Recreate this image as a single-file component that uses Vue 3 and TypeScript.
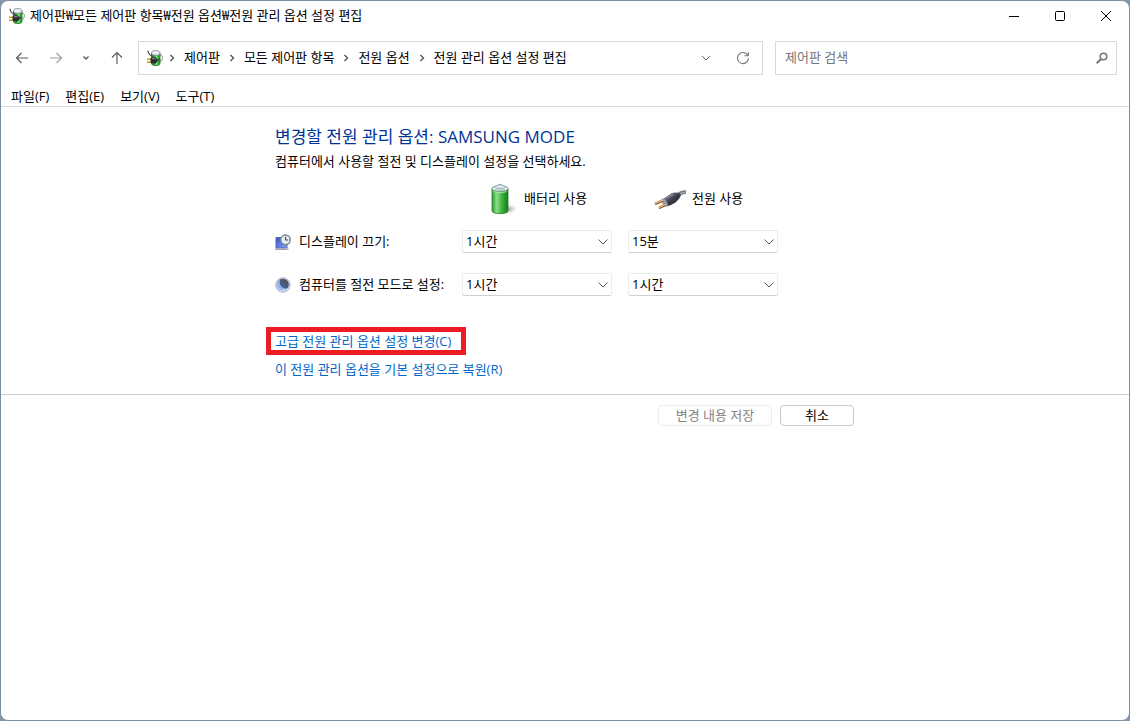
<script setup lang="ts">
import { ref } from 'vue'

interface SettingRow {
  id: string
  icon: 'display' | 'sleep'
  label: string
  battery: string
  plugged: string
}

const title = '제어판₩모든 제어판 항목₩전원 옵션₩전원 관리 옵션 설정 편집'
const crumbs = ['제어판', '모든 제어판 항목', '전원 옵션', '전원 관리 옵션 설정 편집']
const menus = ['파일(F)', '편집(E)', '보기(V)', '도구(T)']
const durations = ['1분', '5분', '15분', '30분', '1시간', '2시간', '안 함']
const query = ref('')
const rows = ref<SettingRow[]>([
  { id: 'display', icon: 'display', label: '디스플레이 끄기:', battery: '1시간', plugged: '15분' },
  { id: 'sleep', icon: 'sleep', label: '컴퓨터를 절전 모드로 설정:', battery: '1시간', plugged: '1시간' },
])
</script>

<template>
  <div class="desktop">
    <svg class="defs" width="0" height="0" aria-hidden="true">
      <defs>
        <linearGradient id="cell" x1="0" x2="1">
          <stop offset="0" stop-color="#2f9a33" />
          <stop offset=".3" stop-color="#8be085" />
          <stop offset=".6" stop-color="#3fb540" />
          <stop offset="1" stop-color="#167a1d" />
        </linearGradient>
        <linearGradient id="cap" x1="0" x2="0" y1="0" y2="1">
          <stop offset="0" stop-color="#8f9fb4" />
          <stop offset=".5" stop-color="#f0f4fa" />
          <stop offset="1" stop-color="#a3b5c6" />
        </linearGradient>
        <radialGradient id="shade">
          <stop offset="0" stop-color="#777" stop-opacity=".75" />
          <stop offset="1" stop-color="#999" stop-opacity="0" />
        </radialGradient>
        <linearGradient id="plug" x1="0" x2="1" y1="0" y2="1">
          <stop offset=".2" stop-color="#7c8192" />
          <stop offset=".5" stop-color="#3a3d4a" />
          <stop offset="1" stop-color="#1d1f29" />
        </linearGradient>
        <linearGradient id="screen" x1="0" x2="1" y1="0" y2="1">
          <stop offset="0" stop-color="#3050d0" />
          <stop offset="1" stop-color="#86a8fa" />
        </linearGradient>
        <linearGradient id="moon" x1="0" x2="1" y1="0" y2="1">
          <stop offset="0" stop-color="#a9b0bb" />
          <stop offset=".5" stop-color="#b9cdec" />
          <stop offset="1" stop-color="#dde4ec" />
        </linearGradient>
        <linearGradient id="night" x1="1" x2="0" y1="0" y2="1">
          <stop offset=".3" stop-color="#50545c" />
          <stop offset="1" stop-color="#3f6fc0" />
        </linearGradient>
        <symbol id="power" viewBox="0 0 16 16">
          <path d="M12 5.500c3.500-1.500 3.800 1.500 3 4-.5 1.200-1.200 2-2.500 2.300" fill="none" stroke="#6f9a72" stroke-width="1" />
          <path d="M4.500 3v10.500c0 2.800 8.500 2.800 8.500 0V3z" fill="#2fae35" stroke="#1f6a25" stroke-width=".8" />
          <path d="M9.500 5v10" stroke="#7be07a" stroke-width="2" />
          <ellipse cx="8.800" cy="2.900" rx="4.200" ry="2.400" fill="#e8edf6" stroke="#7d8796" stroke-width=".8" />
          <path d="M1 .8c.3 3.500 2 5 5.500 5.700" fill="none" stroke="#45484d" stroke-width="1.200" />
          <path d="M0 9.300h4M0 12.300h4" stroke="#d29a1c" stroke-width="1.500" />
          <path d="M3.500 8.500l1.500-1.300h3.500l1.800 1.800v2.800l-1.800 1.700H5l-1.500-1z" fill="#2b2d31" />
          <path d="M5 8.700h3.500" stroke="#8f959d" stroke-width="1" />
          <path d="M10 10.500l2.500-1.500" stroke="#34373c" stroke-width="1.400" />
        </symbol>
      </defs>
    </svg>

    <main class="window">
      <header class="titlebar">
        <svg class="app-icon" width="16" height="16" aria-hidden="true"><use href="#power" /></svg>
        <h1>{{ title }}</h1>
        <div class="controls">
          <button aria-label="최소화">
            <svg width="12" height="12"><path d="M1 6.500h10" stroke="#000" /></svg>
          </button>
          <button aria-label="최대화">
            <svg width="12" height="12"><rect x="1.500" y="1.500" width="9" height="9" rx="1" fill="none" stroke="#000" /></svg>
          </button>
          <button aria-label="닫기">
            <svg width="12" height="12"><path d="M1 1l10 10M11 1L1 11" stroke="#000" /></svg>
          </button>
        </div>
      </header>

      <nav class="navbar">
        <div class="arrows">
          <button class="arrow" aria-label="뒤로">
            <svg width="14" height="14"><path d="M13 7H1.500M6.500 2l-5 5 5 5" fill="none" stroke="#5c5c5c" stroke-width="1.200" /></svg>
          </button>
          <button class="arrow" aria-label="앞으로">
            <svg width="14" height="14"><path d="M1 7h11.500M7.500 2l5 5-5 5" fill="none" stroke="#a0a0a0" stroke-width="1.200" /></svg>
          </button>
          <button class="recent" aria-label="최근 위치">
            <svg width="8" height="8"><path d="M1.500 2.500L4 5l2.500-2.500" fill="none" stroke="#5c5c5c" stroke-width="1.400" /></svg>
          </button>
          <button class="arrow" aria-label="위로">
            <svg width="14" height="14"><path d="M7 13V1.500M2 6.500l5-5 5 5" fill="none" stroke="#5c5c5c" stroke-width="1.200" /></svg>
          </button>
        </div>
        <div class="address">
          <svg width="16" height="16" aria-hidden="true"><use href="#power" /></svg>
          <ol class="crumbs">
            <li v-for="crumb in crumbs" :key="crumb">
              <svg width="6" height="8" aria-hidden="true"><path d="M1.500 1L4.500 4l-3 3" fill="none" stroke="#555" stroke-width="1.400" /></svg>
              <button class="crumb">{{ crumb }}</button>
            </li>
          </ol>
          <button class="tool" aria-label="이전 위치">
            <svg width="10" height="8"><path d="M1 2l4 4 4-4" fill="none" stroke="#666" /></svg>
          </button>
          <button class="tool" aria-label="새로 고침">
            <svg width="14" height="14"><path d="M11.700 4.200A5.500 5.500 0 1 0 12.500 7M12.300 1v3.700H8.500" fill="none" stroke="#777" stroke-width="1.100" /></svg>
          </button>
        </div>
        <label class="search">
          <input v-model="query" type="text" placeholder="제어판 검색" aria-label="제어판 검색" />
          <svg width="12" height="12" aria-hidden="true"><path d="M.7 11.300L5 7" stroke="#777" stroke-width="2" /><circle cx="7.500" cy="4.500" r="3.300" fill="none" stroke="#777" stroke-width="1.600" /></svg>
        </label>
      </nav>

      <div class="menubar">
        <button v-for="menu in menus" :key="menu">{{ menu }}</button>
      </div>

      <section class="content">
        <h2>변경할 전원 관리 옵션: SAMSUNG MODE</h2>
        <p>컴퓨터에서 사용할 절전 및 디스플레이 설정을 선택하세요.</p>

        <div class="settings">
          <div class="head">
            <svg width="32" height="32" aria-hidden="true">
              <ellipse cx="21" cy="26" rx="10" ry="5" fill="url(#shade)" />
              <path d="M6 5v23c0 3.500 16 3.500 16 0V5z" fill="url(#cell)" stroke="#238029" stroke-width=".8" />
              <ellipse cx="14" cy="5.500" rx="8" ry="3" fill="url(#cap)" stroke="#6fa37a" stroke-width=".8" />
              <path d="M8.500 4.500c1-1.500 2.500-1 3-2.500C13 1 15 1 16.500 2c.5 1.500 2 1 3 2.500-2.500 2-8.500 2-11 0z" fill="url(#cap)" stroke="#8b9cae" stroke-width=".6" />
              <path d="M7.500 8.500c3 1.500 10 1.500 13 0" fill="none" stroke="#a8e6a4" />
            </svg>
            <span>배터리 사용</span>
          </div>
          <div class="head plugged">
            <svg width="32" height="32" aria-hidden="true">
              <path d="M22 13c3-2.500 5-4 10-4" fill="none" stroke="#777a85" stroke-width="3.500" />
              <path d="M24 12c3-2 4-2.500 7-2.500" fill="none" stroke="#b2b5be" />
              <path d="M9 16l8-5.500c3-1.500 6-1 8-.5l2 2c-1 3-4 7-9 9.500l-5 2c-2-1-4-4-4-7.500z" fill="url(#plug)" />
              <path d="M8.500 15.500c3 .5 5 3.500 5.500 7.500l-2 .5c-3-1-4.500-4-4.500-7z" fill="#999dac" />
              <path d="M9 17.500l-8 3.500M12 21.500l-7 3.500" stroke="#965c2c" stroke-width="2.600" />
              <path d="M9 17l-8 3.500M12 21l-7 3.500" stroke="#efc391" stroke-width="1.200" />
              <path d="M12 15l7-3.500" stroke="#9298aa" />
            </svg>
            <span>전원 사용</span>
          </div>

          <template v-for="row in rows" :key="row.id">
            <div class="label">
              <svg v-if="row.icon === 'display'" width="16" height="16" aria-hidden="true">
                <path d="M1 3.500h11v10.500H1z" fill="url(#screen)" stroke="#5468a8" />
                <path d="M0 15.300h13.500" stroke="#a4a8b2" stroke-width="1.400" />
                <circle cx="10.500" cy="5.800" r="4.800" fill="#e6ecef" stroke="#7c838b" stroke-width="1.400" />
                <path d="M10.500 2.800v3.200h2.800" fill="none" stroke="#304856" />
              </svg>
              <svg v-else width="16" height="16" aria-hidden="true">
                <circle cx="8" cy="8" r="7.300" fill="url(#moon)" stroke="#b7bcc4" />
                <path d="M5 2.500c4-1.500 8.500.5 8.800 4.500.2 2.500-.8 4-2.300 4.800C7 12 3 7.500 5 2.500z" fill="url(#night)" />
                <path d="M4 4c-.5 4 3 8 7 8-3.500 2-8 .5-8.500-3.500C2.300 6.500 3 5 4 4z" fill="#8db4ee" />
              </svg>
              <span>{{ row.label }}</span>
            </div>
            <div class="choice">
              <select v-model="row.battery" :aria-label="`${row.label} 배터리 사용`">
                <option v-for="d in durations" :key="d">{{ d }}</option>
              </select>
              <svg width="10" height="6" aria-hidden="true"><path d="M.5 .5L5 5 9.500 .5" fill="none" stroke="#555" /></svg>
            </div>
            <div class="choice">
              <select v-model="row.plugged" :aria-label="`${row.label} 전원 사용`">
                <option v-for="d in durations" :key="d">{{ d }}</option>
              </select>
              <svg width="10" height="6" aria-hidden="true"><path d="M.5 .5L5 5 9.500 .5" fill="none" stroke="#555" /></svg>
            </div>
          </template>
        </div>

        <div class="links">
          <a class="marked" href="#advanced">고급 전원 관리 옵션 설정 변경(C)</a>
          <a href="#restore">이 전원 관리 옵션을 기본 설정으로 복원(R)</a>
        </div>
      </section>

      <footer class="footer">
        <div class="actions">
          <button class="save" disabled>변경 내용 저장</button>
          <button class="cancel">취소</button>
        </div>
      </footer>
    </main>
  </div>
</template>

<style>
body {
  margin: 0;
}
</style>

<style scoped>
.desktop {
  box-sizing: border-box;
  min-height: 100vh;
  display: flex;
  background: #8496ac;
  font: 13px/18px "Open Sans", "Noto Sans CJK KR", sans-serif;
  color: #000;
}
.defs {
  position: absolute;
}
.window {
  box-sizing: border-box;
  flex: 1;
  min-width: 0;
  border: 1px solid #7e8ea2;
  border-radius: 8px;
  background: #fff;
  overflow: hidden;
}
button,
input,
select {
  font: inherit;
  color: inherit;
  margin: 0;
  padding: 0;
  border: 0;
  background: none;
}
svg {
  display: block;
  flex: none;
}
.titlebar {
  display: flex;
  align-items: center;
  height: 30px;
  padding-left: 8px;
}
h1 {
  margin: 0 0 0 5px;
  padding-bottom: 2px;
  font-size: 13px;
  font-weight: 400;
  white-space: nowrap;
}
.controls {
  display: flex;
  margin-left: auto;
}
.controls button {
  display: grid;
  place-items: center;
  width: 46px;
  height: 30px;
}
.navbar {
  display: flex;
  align-items: center;
  padding: 10px 12px 0 14px;
}
.arrows {
  display: flex;
  align-items: center;
  justify-content: space-between;
  width: 109px;
  margin-right: 14px;
}
.address,
.search {
  box-sizing: border-box;
  display: flex;
  align-items: center;
  height: 34px;
  border: 1px solid #d9d9d9;
}
.address {
  flex: 625 1 625px;
  min-width: 0;
  padding: 0 12px 0 8px;
}
.crumbs {
  flex: 1;
  display: flex;
  gap: 9px;
  margin: 0;
  padding: 0 0 0 6px;
  list-style: none;
}
.crumbs li {
  display: flex;
  align-items: center;
  gap: 9px;
}
.crumb {
  padding-bottom: 2px;
  white-space: nowrap;
}
.tool {
  display: grid;
  place-items: center;
  width: 14px;
  height: 24px;
  margin-left: 23px;
}
.search {
  flex: 342 1 342px;
  min-width: 0;
  margin-left: 12px;
  padding: 0 8px 0 9px;
}
.search input {
  flex: 1;
  min-width: 0;
  padding-bottom: 2px;
  outline: 0;
}
.search input::placeholder {
  color: #757575;
  opacity: 1;
}
.menubar {
  display: flex;
  gap: 16px;
  padding: 12px 10px 1px;
  border-bottom: 1px solid #d9d9d9;
}
.content {
  max-width: 580px;
  margin: 0 auto;
  padding: 18px 0 16px;
}
h2 {
  margin: 0;
  font-size: 17px;
  line-height: 24px;
  font-weight: 400;
  color: #003399;
}
p {
  margin: 3px 0 0;
}
.settings {
  display: grid;
  grid-template-columns: 171px 150px 150px;
  column-gap: 16px;
  row-gap: 20px;
  margin-top: 13px;
  align-items: center;
}
.label {
  display: flex;
  align-items: center;
  gap: 8px;
  margin-right: -16px;
  white-space: nowrap;
}
.label span,
.head span {
  padding-bottom: 2px;
}
.head {
  display: flex;
  align-items: center;
  gap: 6px;
  padding-left: 24px;
  margin-bottom: -5px;
  grid-column: 2;
}
.head.plugged {
  grid-column: 3;
  padding-left: 26px;
}
.choice {
  position: relative;
}
.choice select {
  appearance: none;
  box-sizing: border-box;
  display: block;
  width: 100%;
  height: 23px;
  padding: 0 24px 2px 3px;
  border: 1px solid #ececec;
  border-bottom-color: #d0d0d0;
  border-radius: 2px;
  background: #fff;
}
.choice svg {
  position: absolute;
  right: 4px;
  top: 9px;
  pointer-events: none;
}
.links {
  display: flex;
  flex-direction: column;
  align-items: flex-start;
  gap: 5px;
  margin-top: 31px;
}
.links a {
  color: #0066cc;
  text-decoration: none;
}
.links .marked {
  margin-left: -9px;
  padding: 0 10px 0 4px;
  border: 5px solid #ed1c24;
}
.footer {
  border-top: 1px solid #cccccc;
  padding-top: 10px;
}
.actions {
  box-sizing: border-box;
  display: flex;
  justify-content: flex-end;
  gap: 8px;
  max-width: 580px;
  margin: 0 auto;
  padding-right: 1px;
}
.actions button {
  box-sizing: border-box;
  height: 21px;
  line-height: 18px;
  padding-bottom: 1px;
  border: 1px solid #c8c8c8;
  border-radius: 4px;
}
.actions .save {
  width: 114px;
  border-color: #ededed;
  color: #838383;
}
.actions .cancel {
  width: 74px;
}
</style>
